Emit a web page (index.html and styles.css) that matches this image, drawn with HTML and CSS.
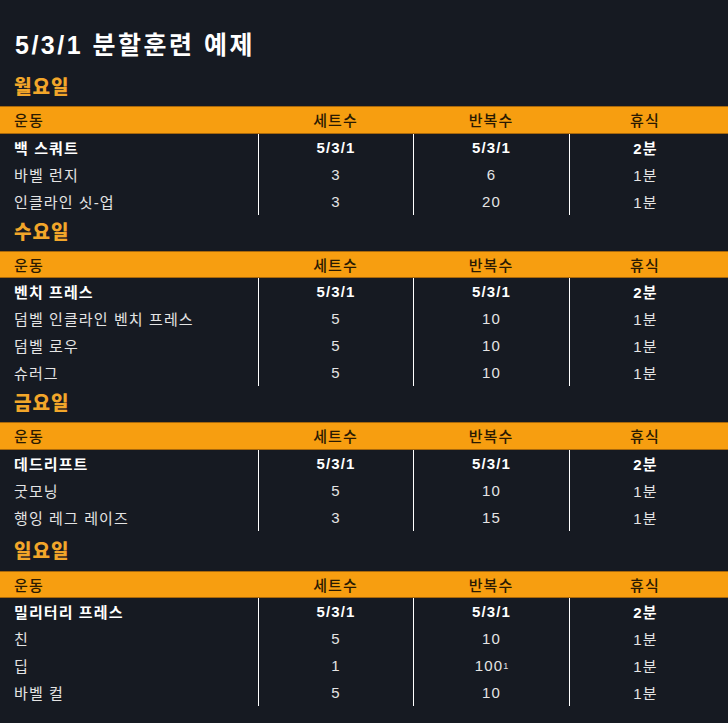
FILE: index.html
```html
<!DOCTYPE html>
<html lang="ko">
<head>
<meta charset="utf-8">
<link rel="stylesheet" href="styles.css">
</head>
<body>
<main class="page">
  <h1 class="title">5/3/1 분할훈련 예제</h1>

  <section class="day">
    <h2 class="day-title">월요일</h2>
    <div class="table">
      <div class="row head"><div class="c name">운동</div><div class="c">세트수</div><div class="c">반복수</div><div class="c">휴식</div></div>
      <div class="body">
        <div class="row main"><div class="c name">백 스쿼트</div><div class="c">5/3/1</div><div class="c">5/3/1</div><div class="c">2분</div></div>
        <div class="row"><div class="c name">바벨 런지</div><div class="c">3</div><div class="c">6</div><div class="c">1분</div></div>
        <div class="row"><div class="c name">인클라인 싯-업</div><div class="c">3</div><div class="c">20</div><div class="c">1분</div></div>
      </div>
    </div>
  </section>

  <section class="day">
    <h2 class="day-title">수요일</h2>
    <div class="table">
      <div class="row head"><div class="c name">운동</div><div class="c">세트수</div><div class="c">반복수</div><div class="c">휴식</div></div>
      <div class="body">
        <div class="row main"><div class="c name">벤치 프레스</div><div class="c">5/3/1</div><div class="c">5/3/1</div><div class="c">2분</div></div>
        <div class="row"><div class="c name">덤벨 인클라인 벤치 프레스</div><div class="c">5</div><div class="c">10</div><div class="c">1분</div></div>
        <div class="row"><div class="c name">덤벨 로우</div><div class="c">5</div><div class="c">10</div><div class="c">1분</div></div>
        <div class="row"><div class="c name">슈러그</div><div class="c">5</div><div class="c">10</div><div class="c">1분</div></div>
      </div>
    </div>
  </section>

  <section class="day">
    <h2 class="day-title">금요일</h2>
    <div class="table">
      <div class="row head"><div class="c name">운동</div><div class="c">세트수</div><div class="c">반복수</div><div class="c">휴식</div></div>
      <div class="body">
        <div class="row main"><div class="c name">데드리프트</div><div class="c">5/3/1</div><div class="c">5/3/1</div><div class="c">2분</div></div>
        <div class="row"><div class="c name">굿모닝</div><div class="c">5</div><div class="c">10</div><div class="c">1분</div></div>
        <div class="row"><div class="c name">행잉 레그 레이즈</div><div class="c">3</div><div class="c">15</div><div class="c">1분</div></div>
      </div>
    </div>
  </section>

  <section class="day last">
    <h2 class="day-title">일요일</h2>
    <div class="table">
      <div class="row head"><div class="c name">운동</div><div class="c">세트수</div><div class="c">반복수</div><div class="c">휴식</div></div>
      <div class="body">
        <div class="row main"><div class="c name">밀리터리 프레스</div><div class="c">5/3/1</div><div class="c">5/3/1</div><div class="c">2분</div></div>
        <div class="row"><div class="c name">친</div><div class="c">5</div><div class="c">10</div><div class="c">1분</div></div>
        <div class="row"><div class="c name">딥</div><div class="c">1</div><div class="c">100<sup class="note">1</sup></div><div class="c">1분</div></div>
        <div class="row"><div class="c name">바벨 컬</div><div class="c">5</div><div class="c">10</div><div class="c">1분</div></div>
      </div>
    </div>
  </section>
</main>
</body>
</html>
```

FILE: styles.css
```css
* { box-sizing: border-box; }
html, body { margin: 0; padding: 0; }
body {
  background: #161a22;
  color: #e4e4e4;
  font-family: "Liberation Sans", "Noto Sans CJK KR", sans-serif;
  width: 728px;
  height: 723px;
  overflow: hidden;
}
.page { padding-top: 25px; }
.title {
  margin: 0 0 5px 15px;
  font-size: 25px;
  line-height: 40px;
  font-weight: 700;
  letter-spacing: 2.5px;
  color: #ffffff;
}
.day-title {
  margin: 0 0 0 14px;
  height: 36px;
  font-size: 19px;
  line-height: 36px;
  font-weight: 900;
  letter-spacing: 1px;
  color: #f2a62a;
}
.last .day-title { height: 40px; line-height: 42px; }
.row {
  display: grid;
  grid-template-columns: 258px 155px 156px 152px;
  height: 27px;
  font-size: 15px;
  letter-spacing: 1.1px;
}
.c { display: flex; align-items: center; justify-content: center; }
.c.name { justify-content: flex-start; padding-left: 14px; }
.head {
  height: 27.5px;
  background: #f79e10;
  color: #2a1a02;
  border-top: 1px solid #a8680c;
  border-bottom: 1px solid #a8680c;
  font-weight: 500;
}
.body .c + .c { border-left: 1px solid #ffffff; }
.main { color: #ffffff; font-weight: 700; }
.note { font-size: 9px; vertical-align: 5px; line-height: 0; letter-spacing: 0; }
```
